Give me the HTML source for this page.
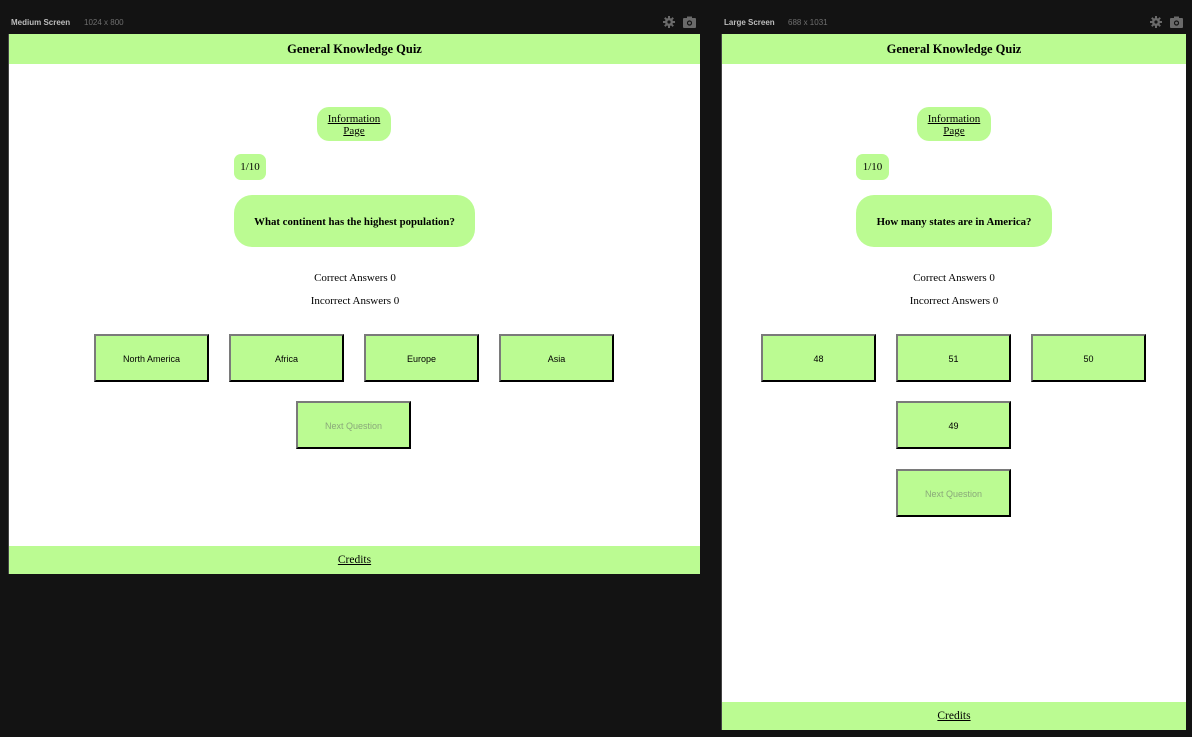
<!DOCTYPE html>
<html><head><meta charset="utf-8"><style>
*{margin:0;padding:0;box-sizing:border-box}
body{width:1192px;height:737px;background:#131313;position:relative;overflow:hidden;font-family:"Liberation Serif",serif;color:#000}
.a{position:absolute}
.lbl{font-family:"Liberation Sans",sans-serif;font-size:8px;font-weight:bold;color:#bdbdbd;top:18px}
.dim{font-family:"Liberation Sans",sans-serif;font-size:8px;color:#6f6f6f;top:18px}
.panel{background:#fff;border-left:1px solid #444}
.bar{background:#bbfb92;left:0;right:0;text-align:center}
.hdr{top:0;height:30px;line-height:31px;font-size:12.5px;font-weight:bold}
.ftr{bottom:0;height:28px;line-height:28px;font-size:11.5px}
u{text-decoration:underline}
.pill{background:#bbfb92;border-radius:12px;font-size:11px;text-align:center;line-height:12px}
.q{background:#bbfb92;border-radius:18px;font-size:10.8px;font-weight:bold;text-align:center;line-height:54px}
.t{font-size:11px;text-align:center;width:200px}
.b{width:115px;height:48px;background:#bbfb92;border:2px solid;border-color:#7a7a7a #000 #000 #7a7a7a;font-family:"Liberation Sans",sans-serif;font-size:9px;text-align:center;line-height:46px}
.n{color:#8aa87a}
</style></head><body>
<div class="a lbl" style="left:11px">Medium Screen</div>
<div class="a dim" style="left:84px">1024 x 800</div>
<div class="a lbl" style="left:724px">Large Screen</div>
<div class="a dim" style="left:788px">688 x 1031</div>
<svg class="a" style="left:663px;top:16px" width="12" height="12" viewBox="0 0 12 12"><circle cx="6" cy="6" r="4" fill="#6a6a6a"/><g stroke="#6a6a6a" stroke-width="2"><path d="M6 0v12M0 6h12M1.8 1.8l8.4 8.4M10.2 1.8l-8.4 8.4"/></g><circle cx="6" cy="6" r="1.6" fill="#131313"/></svg>
<svg class="a" style="left:683px;top:16px" width="13" height="12" viewBox="0 0 13 12"><rect x="0" y="2" width="13" height="10" rx="1" fill="#6a6a6a"/><rect x="4" y="0.5" width="5" height="2" fill="#6a6a6a"/><circle cx="6.5" cy="7" r="2.6" fill="#131313"/><circle cx="6.5" cy="7" r="1.4" fill="#6a6a6a"/></svg>
<svg class="a" style="left:1150px;top:16px" width="12" height="12" viewBox="0 0 12 12"><circle cx="6" cy="6" r="4" fill="#6a6a6a"/><g stroke="#6a6a6a" stroke-width="2"><path d="M6 0v12M0 6h12M1.8 1.8l8.4 8.4M10.2 1.8l-8.4 8.4"/></g><circle cx="6" cy="6" r="1.6" fill="#131313"/></svg>
<svg class="a" style="left:1170px;top:16px" width="13" height="12" viewBox="0 0 13 12"><rect x="0" y="2" width="13" height="10" rx="1" fill="#6a6a6a"/><rect x="4" y="0.5" width="5" height="2" fill="#6a6a6a"/><circle cx="6.5" cy="7" r="2.6" fill="#131313"/><circle cx="6.5" cy="7" r="1.4" fill="#6a6a6a"/></svg>

<div class="a panel" style="left:8px;top:34px;width:692px;height:540px">
 <div class="a bar hdr">General Knowledge Quiz</div>
 <div class="a bar ftr"><u>Credits</u></div>
</div>
<div class="a pill" style="left:317px;top:107px;width:74px;height:34px;padding-top:6px"><u>Information<br>Page</u></div>
<div class="a pill" style="left:234px;top:154px;width:32px;height:26px;line-height:27px;border-radius:7px">1/10</div>
<div class="a q" style="left:234px;top:195px;width:241px;height:52px">What continent has the highest population?</div>
<div class="a t" style="left:255px;top:272px">Correct Answers 0</div>
<div class="a t" style="left:255px;top:295px">Incorrect Answers 0</div>
<div class="a b" style="left:94px;top:334px">North America</div>
<div class="a b" style="left:229px;top:334px">Africa</div>
<div class="a b" style="left:364px;top:334px">Europe</div>
<div class="a b" style="left:499px;top:334px">Asia</div>
<div class="a b n" style="left:296px;top:401px">Next Question</div>

<div class="a panel" style="left:721px;top:34px;width:465px;height:696px">
 <div class="a bar hdr">General Knowledge Quiz</div>
 <div class="a bar ftr"><u>Credits</u></div>
</div>
<div class="a pill" style="left:917px;top:107px;width:74px;height:34px;padding-top:6px"><u>Information<br>Page</u></div>
<div class="a pill" style="left:856px;top:154px;width:33px;height:26px;line-height:27px;border-radius:7px">1/10</div>
<div class="a q" style="left:856px;top:195px;width:196px;height:52px">How many states are in America?</div>
<div class="a t" style="left:854px;top:272px">Correct Answers 0</div>
<div class="a t" style="left:854px;top:295px">Incorrect Answers 0</div>
<div class="a b" style="left:761px;top:334px">48</div>
<div class="a b" style="left:896px;top:334px">51</div>
<div class="a b" style="left:1031px;top:334px">50</div>
<div class="a b" style="left:896px;top:401px">49</div>
<div class="a b n" style="left:896px;top:469px">Next Question</div>
</body></html>
